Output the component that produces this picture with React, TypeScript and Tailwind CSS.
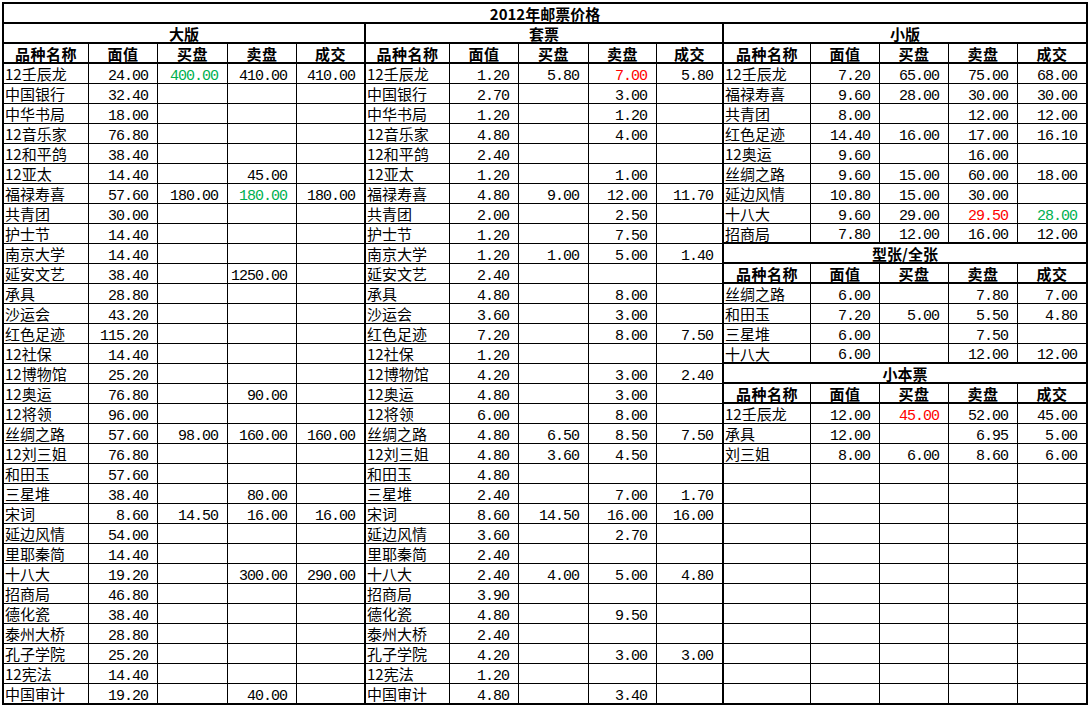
import React from 'react'

// ── Data ─────────────────────────────────────────────────────────────────────
// row: [名称, 面值, 买盘, 卖盘, 成交]; prefix g = green, r = red

type Row = string[]

const bigRows: Row[] = [
  ['12壬辰龙', '24.00', 'g400.00', '410.00', '410.00'],
  ['中国银行', '32.40'],
  ['中华书局', '18.00'],
  ['12音乐家', '76.80'],
  ['12和平鸽', '38.40'],
  ['12亚太', '14.40', '', '45.00'],
  ['福禄寿喜', '57.60', '180.00', 'g180.00', '180.00'],
  ['共青团', '30.00'],
  ['护士节', '14.40'],
  ['南京大学', '14.40'],
  ['延安文艺', '38.40', '', '1250.00'],
  ['承具', '28.80'],
  ['沙运会', '43.20'],
  ['红色足迹', '115.20'],
  ['12社保', '14.40'],
  ['12博物馆', '25.20'],
  ['12奥运', '76.80', '', '90.00'],
  ['12将领', '96.00'],
  ['丝绸之路', '57.60', '98.00', '160.00', '160.00'],
  ['12刘三姐', '76.80'],
  ['和田玉', '57.60'],
  ['三星堆', '38.40', '', '80.00'],
  ['宋词', '8.60', '14.50', '16.00', '16.00'],
  ['延边风情', '54.00'],
  ['里耶秦简', '14.40'],
  ['十八大', '19.20', '', '300.00', '290.00'],
  ['招商局', '46.80'],
  ['德化瓷', '38.40'],
  ['泰州大桥', '28.80'],
  ['孔子学院', '25.20'],
  ['12宪法', '14.40'],
  ['中国审计', '19.20', '', '40.00'],
]

const setRows: Row[] = [
  ['12壬辰龙', '1.20', '5.80', 'r7.00', '5.80'],
  ['中国银行', '2.70', '', '3.00'],
  ['中华书局', '1.20', '', '1.20'],
  ['12音乐家', '4.80', '', '4.00'],
  ['12和平鸽', '2.40'],
  ['12亚太', '1.20', '', '1.00'],
  ['福禄寿喜', '4.80', '9.00', '12.00', '11.70'],
  ['共青团', '2.00', '', '2.50'],
  ['护士节', '1.20', '', '7.50'],
  ['南京大学', '1.20', '1.00', '5.00', '1.40'],
  ['延安文艺', '2.40'],
  ['承具', '4.80', '', '8.00'],
  ['沙运会', '3.60', '', '3.00'],
  ['红色足迹', '7.20', '', '8.00', '7.50'],
  ['12社保', '1.20'],
  ['12博物馆', '4.20', '', '3.00', '2.40'],
  ['12奥运', '4.80', '', '3.00'],
  ['12将领', '6.00', '', '8.00'],
  ['丝绸之路', '4.80', '6.50', '8.50', '7.50'],
  ['12刘三姐', '4.80', '3.60', '4.50'],
  ['和田玉', '4.80'],
  ['三星堆', '2.40', '', '7.00', '1.70'],
  ['宋词', '8.60', '14.50', '16.00', '16.00'],
  ['延边风情', '3.60', '', '2.70'],
  ['里耶秦简', '2.40'],
  ['十八大', '2.40', '4.00', '5.00', '4.80'],
  ['招商局', '3.90'],
  ['德化瓷', '4.80', '', '9.50'],
  ['泰州大桥', '2.40'],
  ['孔子学院', '4.20', '', '3.00', '3.00'],
  ['12宪法', '1.20'],
  ['中国审计', '4.80', '', '3.40'],
]

const smallRows: Row[] = [
  ['12壬辰龙', '7.20', '65.00', '75.00', '68.00'],
  ['福禄寿喜', '9.60', '28.00', '30.00', '30.00'],
  ['共青团', '8.00', '', '12.00', '12.00'],
  ['红色足迹', '14.40', '16.00', '17.00', '16.10'],
  ['12奥运', '9.60', '', '16.00'],
  ['丝绸之路', '9.60', '15.00', '60.00', '18.00'],
  ['延边风情', '10.80', '15.00', '30.00'],
  ['十八大', '9.60', '29.00', 'r29.50', 'g28.00'],
  ['招商局', '7.80', '12.00', '16.00', '12.00'],
]

const sheetRows: Row[] = [
  ['丝绸之路', '6.00', '', '7.80', '7.00'],
  ['和田玉', '7.20', '5.00', '5.50', '4.80'],
  ['三星堆', '6.00', '', '7.50'],
  ['十八大', '6.00', '', '12.00', '12.00'],
]

const bookletRows: Row[] = [
  ['12壬辰龙', '12.00', 'r45.00', '52.00', '45.00'],
  ['承具', '12.00', '', '6.95', '5.00'],
  ['刘三姐', '8.00', '6.00', '8.60', '6.00'],
]

const HEAD = ['品种名称', '面值', '买盘', '卖盘', '成交']

// ── Cells ────────────────────────────────────────────────────────────────────

function Value({ v }: { v: string }) {
  if (v.startsWith('g')) return <span className="text-[#00b050]">{v.slice(1)}</span>
  if (v.startsWith('r')) return <span className="text-[#ff0000]">{v.slice(1)}</span>
  return <span>{v}</span>
}

function DataRow({ row, cols, edge }: { row: Row; cols: string; edge: 'thin' | 'thick' | 'none' }) {
  const h = edge === 'none' ? 'h-[19px]' : edge === 'thick' ? 'h-[20px] border-b-2 border-black' : 'h-[20px] border-b border-black'
  return (
    <div className={`grid ${cols} ${h}`}>
      {[0, 1, 2, 3, 4].map((i) => (
        <div key={i}
          className={`flex overflow-visible whitespace-nowrap ${i < 4 ? 'border-r border-black' : ''} ${
            i === 0
              ? "items-center pl-[1px] text-[15px] font-['Noto_Sans_CJK_SC','Noto_Sans',sans-serif] leading-none"
              : "items-end justify-end pr-[9px] text-[15px] tracking-[-1px] font-['Liberation_Mono','DejaVu_Sans_Mono',monospace] leading-[12px]"
          }`}>
          {i === 0 ? row[0] ?? '' : <Value v={row[i] ?? ''} />}
        </div>
      ))}
    </div>
  )
}

function Title({ text }: { text: string }) {
  return (
    <div className="h-[20px] border-b-2 border-black flex items-center justify-center text-[15px] font-bold leading-none font-['Noto_Sans_CJK_SC',sans-serif]">
      {text}
    </div>
  )
}

function HeadRow({ cols }: { cols: string }) {
  return (
    <div className={`grid ${cols} h-[20px] border-b-2 border-black`}>
      {HEAD.map((t, i) => (
        <div key={t}
          className={`flex items-center justify-center text-[15px] font-bold tracking-[0.5px] leading-none font-['Noto_Sans_CJK_SC',sans-serif] ${i < 4 ? 'border-r border-black' : ''}`}>
          {t}
        </div>
      ))}
    </div>
  )
}

function Block({ title, rows, cols, endThick, lastNone }: {
  title: string; rows: Row[]; cols: string; endThick?: boolean; lastNone?: boolean
}) {
  return (
    <>
      <Title text={title} />
      <HeadRow cols={cols} />
      {rows.map((r, i) => {
        const last = i === rows.length - 1
        const edge = last && lastNone ? 'none' : last && endThick ? 'thick' : 'thin'
        return <DataRow key={i} row={r} cols={cols} edge={edge} />
      })}
    </>
  )
}

// ── Sheet ────────────────────────────────────────────────────────────────────

export default function App() {
  const leftCols = 'grid-cols-[85px_69px_70px_69px_67px]'
  const midCols = 'grid-cols-[84px_69px_70px_68px_65px]'
  const rightCols = 'grid-cols-[87px_69px_69px_69px_68px]'
  const empty: Row[] = Array.from({ length: 12 }, () => [])

  return (
    <div className="w-[1088px] h-[705px] bg-white text-black overflow-hidden">
      <div className="ml-[2px] mt-[2px] w-[1086px] border-2 border-black flex flex-col">
        <div className="h-[20px] border-b-2 border-black flex items-center justify-center text-[15px] font-bold leading-none font-['Noto_Sans_CJK_SC',sans-serif]">
          2012年邮票价格
        </div>
        <div className="flex">
          <div className="w-[362px] border-r-2 border-black flex flex-col">
            <Block title="大版" rows={bigRows} cols={leftCols} lastNone />
          </div>
          <div className="w-[358px] border-r-2 border-black flex flex-col">
            <Block title="套票" rows={setRows} cols={midCols} lastNone />
          </div>
          <div className="w-[362px] flex flex-col">
            <Block title="小版" rows={smallRows} cols={rightCols} endThick />
            <Block title="型张/全张" rows={sheetRows} cols={rightCols} endThick />
            <Block title="小本票" rows={bookletRows} cols={rightCols} />
            {empty.map((r, i) => (
              <DataRow key={i} row={r} cols={rightCols} edge={i === empty.length - 1 ? 'none' : 'thin'} />
            ))}
          </div>
        </div>
      </div>
    </div>
  )
}
